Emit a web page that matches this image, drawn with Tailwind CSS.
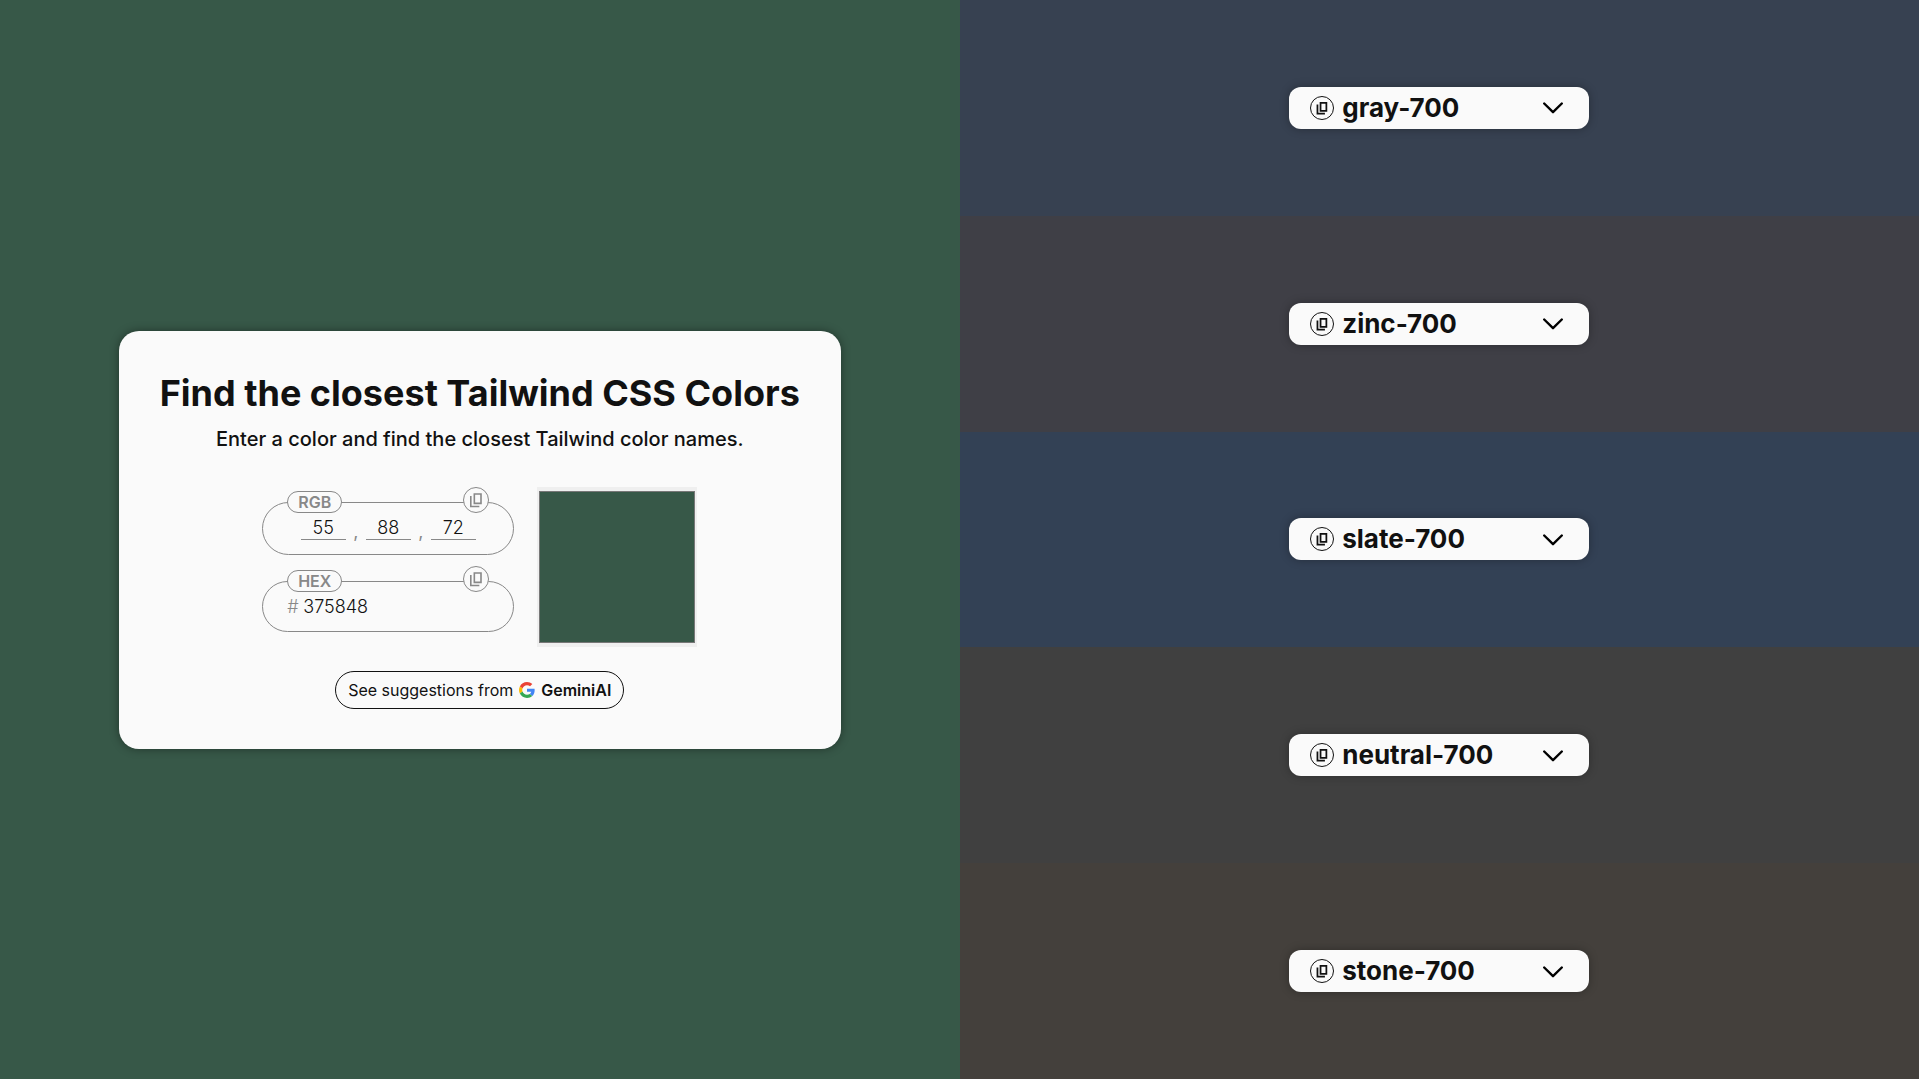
<!DOCTYPE html>
<html lang="en">
<head>
<meta charset="utf-8">
<meta name="viewport" content="width=device-width, initial-scale=1">
<title>Find the closest Tailwind CSS Colors</title>
<script src="https://cdn.jsdelivr.net/npm/@tailwindcss/browser@4"></script>
</head>
<body class="font-[Inter,sans-serif] text-[#111111]">
<svg class="hidden" aria-hidden="true">
  <symbol id="copy" viewBox="0 0 24 24"><path fill="none" stroke="currentColor" d="M9.500 3h10v14h-10zM4.200 6v15.800H17"/></symbol>
  <symbol id="chevron" viewBox="0 0 20 12"><path fill="none" stroke="currentColor" stroke-width="2.400" stroke-linecap="round" stroke-linejoin="round" d="M1.200 1.500 10 10.200l8.800-8.700"/></symbol>
</svg>
<main class="grid min-h-screen grid-cols-2">
  <section class="flex items-center justify-center bg-[#375848]">
    <div class="flex flex-col items-center rounded-[20px] bg-[#fafafa] px-[41px] py-10 shadow-[0_0_10px_rgba(0,0,0,0.4)]">
      <h1 class="text-4xl leading-[44px] font-bold">Find the closest Tailwind CSS Colors</h1>
      <p class="mt-3 text-xl leading-6 font-medium">Enter a color and find the closest Tailwind color names.</p>
      <div class="mt-9 flex gap-[23px]">
        <div class="flex w-[252px] flex-col gap-[26px] pt-[15px] text-lg">
          <div role="group" aria-labelledby="rgb-label" class="relative flex h-[53px] items-center justify-center rounded-full border border-[#888888]">
            <span id="rgb-label" class="absolute -top-3 left-6 h-[22px] w-[55px] rounded-full border border-[#888888] bg-[#fafafa] text-center text-base leading-5 font-semibold text-[#888888]">RGB</span>
            <button type="button" aria-label="Copy RGB" class="absolute -top-4 right-6 flex size-[26px] items-center justify-center rounded-full border border-[#888888] bg-[#fafafa] text-[#888888]"><svg class="size-4 stroke-[2.4]"><use href="#copy"/></svg></button>
            <input aria-label="Red" value="55" class="h-6 w-[45px] border-b border-[#888888] text-center font-light">
            <span class="w-5 pt-2 text-center text-[#888888]">,</span>
            <input aria-label="Green" value="88" class="h-6 w-[45px] border-b border-[#888888] text-center font-light">
            <span class="w-5 pt-2 text-center text-[#888888]">,</span>
            <input aria-label="Blue" value="72" class="h-6 w-[45px] border-b border-[#888888] text-center font-light">
          </div>
          <div class="relative flex h-[51px] items-center rounded-full border border-[#888888] pt-px pl-6">
            <label for="hex" class="absolute -top-3 left-6 h-[22px] w-[55px] rounded-full border border-[#888888] bg-[#fafafa] text-center text-base leading-5 font-semibold text-[#888888]">HEX</label>
            <button type="button" aria-label="Copy HEX" class="absolute -top-4 right-6 flex size-[26px] items-center justify-center rounded-full border border-[#888888] bg-[#fafafa] text-[#888888]"><svg class="size-4 stroke-[2.4]"><use href="#copy"/></svg></button>
            <span class="w-4 font-light text-[#888888]">#</span>
            <input id="hex" value="375848" class="w-32 font-light">
          </div>
        </div>
        <input type="color" aria-label="Pick a color" value="#375848" class="size-40 bg-[#efefef]">
      </div>
      <button type="button" class="mt-6 flex h-[38px] items-center rounded-full border border-[#111111] px-3 text-base">
        See suggestions from
        <svg class="mx-[6px] size-4" viewBox="0 0 48 48" aria-hidden="true"><path fill="#EA4335" d="M24 9.500c3.540 0 6.710 1.220 9.210 3.600l6.850-6.850C35.900 2.380 30.470 0 24 0 14.620 0 6.510 5.380 2.560 13.220l7.980 6.190C12.430 13.720 17.740 9.500 24 9.500z"/><path fill="#4285F4" d="M46.980 24.550c0-1.570-.15-3.090-.38-4.550H24v9.020h12.940c-.58 2.960-2.260 5.480-4.780 7.180l7.730 6c4.510-4.180 7.090-10.360 7.090-17.650z"/><path fill="#FBBC05" d="M10.530 28.590c-.48-1.450-.76-2.990-.76-4.590s.27-3.140.76-4.590l-7.980-6.190C.92 16.460 0 20.120 0 24c0 3.880.92 7.540 2.560 10.780l7.970-6.190z"/><path fill="#34A853" d="M24 48c6.480 0 11.930-2.130 15.890-5.810l-7.730-6c-2.150 1.450-4.920 2.300-8.160 2.300-6.260 0-11.570-4.220-13.470-9.910l-7.980 6.190C6.510 42.620 14.620 48 24 48z"/></svg>
        <span class="font-semibold">GeminiAI</span>
      </button>
    </div>
  </section>
  <section class="grid grid-rows-5" id="matches"></section>
</main>
<template id="match">
  <article class="flex items-center justify-center">
    <div class="flex h-[42px] w-[300px] items-center rounded-xl bg-[#fafafa] pr-[26px] pl-[21px] shadow-[0_0_10px_rgba(0,0,0,0.3)]">
      <button type="button" data-copy class="flex size-6 items-center justify-center rounded-full border border-[#111111]"><svg class="size-[14px] stroke-3"><use href="#copy"/></svg></button>
      <h2 class="ml-2 flex-1 text-[26px] leading-8 font-bold"></h2>
      <button type="button" data-toggle aria-expanded="false" class="pt-px text-black"><svg class="h-3 w-5"><use href="#chevron"/></svg></button>
    </div>
  </article>
</template>
<script>
  const matches = [
    ['gray-700', '#374151'],
    ['zinc-700', '#3f3f46'],
    ['slate-700', '#334155'],
    ['neutral-700', '#404040'],
    ['stone-700', '#44403c'],
  ];
  const list = document.getElementById('matches');
  for (const [name, color] of matches) {
    const row = document.getElementById('match').content.cloneNode(true);
    row.querySelector('article').style.backgroundColor = color;
    row.querySelector('h2').textContent = name;
    row.querySelector('[data-copy]').setAttribute('aria-label', 'Copy ' + name);
    row.querySelector('[data-toggle]').setAttribute('aria-label', 'Show details of ' + name);
    list.append(row);
  }
</script>
</body>
</html>
